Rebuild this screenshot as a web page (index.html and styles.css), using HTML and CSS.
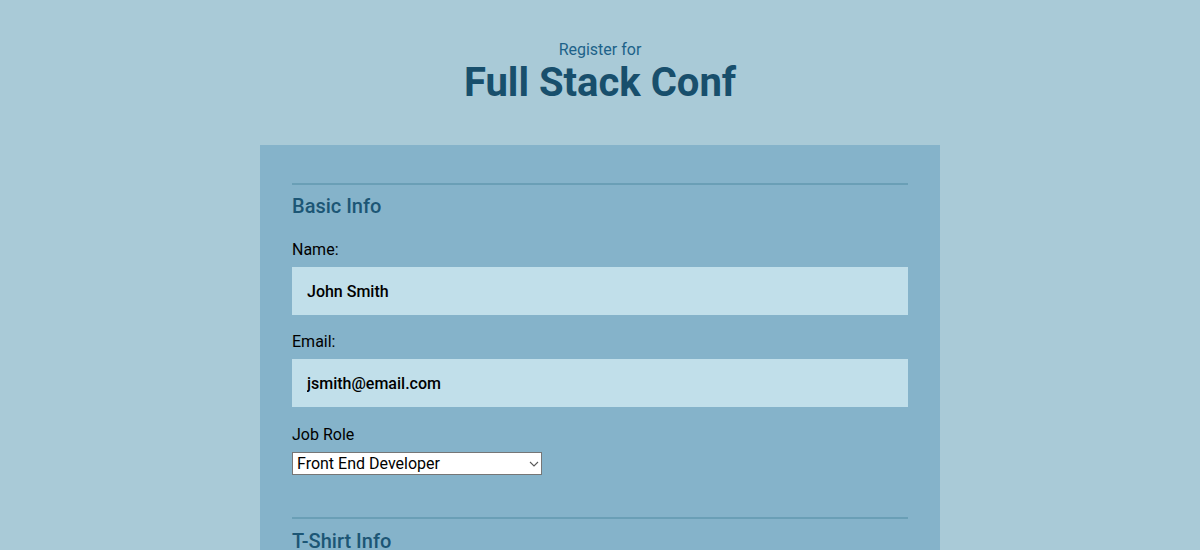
FILE: index.html
```html
<!DOCTYPE html>
<html>
<head>
<meta charset="utf-8">
<link rel="stylesheet" href="styles.css">
</head>
<body>
<header class="header">
  <span class="pre">Register for</span>
  <h1 class="title">Full Stack Conf</h1>
</header>
<form class="card">
  <section class="group">
    <h2 class="legend">Basic Info</h2>
    <label class="label" for="name">Name:</label>
    <input class="field" id="name" type="text" value="John Smith">
    <label class="label" for="email">Email:</label>
    <input class="field" id="email" type="email" value="jsmith@email.com">
    <label class="label label-select" for="role">Job Role</label>
    <span class="select-wrap">
      <select class="select" id="role">
        <option>Front End Developer</option>
      </select>
      <svg class="chev" width="10" height="6" viewBox="0 0 10 6"><path d="M1 1 L5 5 L9 1" fill="none" stroke="#5a5a5a" stroke-width="1.1"/></svg>
    </span>
  </section>
  <section class="group">
    <h2 class="legend legend-next">T-Shirt Info</h2>
  </section>
</form>
</body>
</html>
```
FILE: styles.css
```css
* { box-sizing: border-box; }
html, body { margin: 0; }
body {
  background: #a9cad7;
  font-family: Roboto, "Liberation Sans", sans-serif;
  color: #000;
  height: 550px;
  overflow: hidden;
}
.header {
  display: flex;
  flex-direction: column;
  align-items: center;
  padding-top: 41px;
}
.pre {
  font-size: 16px;
  line-height: 18px;
  color: #1d6289;
}
.title {
  margin: 0;
  font-size: 40px;
  line-height: 48px;
  font-weight: 700;
  color: #184f6c;
}
.card {
  width: 680px;
  margin: 38px auto 0;
  background: #85b3ca;
  padding: 38px 32px 0;
}
.group {
  border-top: 2px solid #6a9fb6;
  display: flex;
  flex-direction: column;
  align-items: flex-start;
  padding-bottom: 42px;
}
.legend {
  margin: 9px 0 0;
  font-size: 20px;
  line-height: 24px;
  font-weight: 500;
  color: #1c5675;
}
.legend-next { margin-top: 10px; }
.label {
  font-size: 16px;
  line-height: 18px;
  margin-top: 18px;
}
.legend + .label { margin-top: 23px; }
.field {
  margin-top: 8px;
  width: 100%;
  height: 48px;
  border: 0;
  background: #c1dfea;
  padding: 0 15px;
  font-family: Roboto, "Liberation Sans", sans-serif;
  font-size: 16px;
  font-weight: 500;
  color: #000;
}
.label-select { margin-top: 19px; }
.select-wrap {
  position: relative;
  margin-top: 8px;
  display: flex;
}
.select {
  appearance: none;
  -webkit-appearance: none;
  width: 250px;
  height: 23px;
  padding: 0 20px 0 4px;
  font-family: Roboto, "Liberation Sans", sans-serif;
  font-size: 16px;
  background: #fff;
  border: 1px solid #767676;
  border-radius: 0;
  color: #000;
}
.chev {
  position: absolute;
  right: 3px;
  top: 9px;
  pointer-events: none;
}
```
